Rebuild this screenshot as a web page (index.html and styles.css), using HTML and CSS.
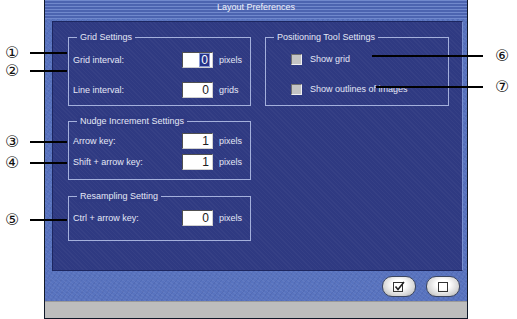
FILE: index.html
```html
<!DOCTYPE html>
<html lang="en">
<head>
    <meta charset="UTF-8">
    <title>Layout Preferences</title>
    <link rel="stylesheet" href="styles.css">
</head>
<body>
    <div class="screen">
        <div class="window">
            <div class="titlebar">Layout Preferences</div>
            <div class="window-body">
                <div class="panel">
                    <div class="col">
                        <div class="group grid-group">
                            <div class="legend">Grid Settings</div>
                            <div class="rows">
                                <div class="row"><span class="label">Grid interval:</span><span class="field"><span class="sel">0</span></span><span class="unit">pixels</span></div>
                                <div class="row"><span class="label">Line interval:</span><span class="field">0</span><span class="unit">grids</span></div>
                            </div>
                        </div>
                        <div class="group nudge-group">
                            <div class="legend">Nudge Increment Settings</div>
                            <div class="rows">
                                <div class="row"><span class="label">Arrow key:</span><span class="field">1</span><span class="unit">pixels</span></div>
                                <div class="row"><span class="label">Shift + arrow key:</span><span class="field">1</span><span class="unit">pixels</span></div>
                            </div>
                        </div>
                        <div class="group resample-group">
                            <div class="legend">Resampling Setting</div>
                            <div class="rows">
                                <div class="row"><span class="label">Ctrl + arrow key:</span><span class="field">0</span><span class="unit">pixels</span></div>
                            </div>
                        </div>
                    </div>
                    <div class="col">
                        <div class="group pos-group">
                            <div class="legend">Positioning Tool Settings</div>
                            <div class="rows">
                                <div class="row"><span class="check"></span><span>Show grid</span></div>
                                <div class="row"><span class="check"></span><span>Show outlines of images</span></div>
                            </div>
                        </div>
                    </div>
                </div>
                <div class="buttons">
                    <button class="pill">
                        <svg width="12" height="11" viewBox="0 0 12 11">
                            <rect x="0.5" y="1.5" width="9" height="9" fill="none" stroke="#333" stroke-width="1"/>
                            <path d="M2.5 5.5 L5 8.5 L11 1" fill="none" stroke="#222" stroke-width="1.6"/>
                        </svg>
                    </button>
                    <button class="pill">
                        <svg width="12" height="11" viewBox="0 0 12 11">
                            <rect x="1.5" y="1.5" width="9" height="9" fill="none" stroke="#333" stroke-width="1"/>
                        </svg>
                    </button>
                </div>
            </div>
            <div class="statusbar"></div>
        </div>

        <!-- callout markers -->
        <div class="callout left c1"><span class="num">①</span><span class="line"></span></div>
        <div class="callout left c2"><span class="num">②</span><span class="line"></span></div>
        <div class="callout left c3"><span class="num">③</span><span class="line"></span></div>
        <div class="callout left c4"><span class="num">④</span><span class="line"></span></div>
        <div class="callout left c5"><span class="num">⑤</span><span class="line"></span></div>
        <div class="callout right c6"><span class="line"></span><span class="num">⑥</span></div>
        <div class="callout right c7"><span class="line"></span><span class="num">⑦</span></div>
    </div>
</body>
</html>
```

FILE: styles.css
```css
body {
    margin: 0;
    background: #fff;
    font-family: "Liberation Sans", Arial, sans-serif;
}

.screen {
    position: relative;
    width: 517px;
    height: 319px;
    overflow: hidden;
}

.window {
    margin-left: 44px;
    width: 422px;
    height: 318px;
    border: 1px solid #101828;
    border-top: none;
    background: #5a76c0;
    display: flex;
    flex-direction: column;
}

.titlebar {
    height: 20px;
    box-sizing: border-box;
    padding-top: 2px;
    text-align: center;
    font-size: 9px;
    line-height: 11px;
    color: #f0f2fa;
    background: repeating-linear-gradient(to bottom, #7088cc 0 1px, #4c64b0 1px 3px);
}

.window-body {
    padding: 2px 4px 0 7px;
    background-color: #5873bf;
    background-image:
        repeating-linear-gradient(37deg, rgba(255,255,255,0.05) 0 1px, transparent 1px 3px),
        repeating-linear-gradient(-53deg, rgba(0,0,40,0.06) 0 1px, transparent 1px 4px);
}

.panel {
    height: 250px;
    box-sizing: border-box;
    border: 1px solid #1c2660;
    border-right-color: #7a90d0;
    background-color: #2f3a82;
    background-image: repeating-linear-gradient(45deg, rgba(255,255,255,0.03) 0 1px, transparent 1px 3px);
    padding: 15px 0 0 15px;
    display: flex;
    gap: 14px;
}

.col {
    display: flex;
    flex-direction: column;
    gap: 15px;
}

.col:first-child {
    width: 183px;
}

.col:last-child {
    width: 184px;
}

.group {
    border: 1px solid #a4b0dc;
    color: #e4e8f6;
    font-size: 9px;
}

.legend {
    width: fit-content;
    margin: -6px 0 0 8px;
    padding: 0 3px;
    line-height: 11px;
    background: #2f3a82;
}

.rows {
    display: flex;
    flex-direction: column;
    padding-left: 4px;
}

.row {
    height: 16px;
    display: flex;
    align-items: center;
}

.label {
    width: 109px;
}

.field {
    width: 31px;
    height: 16px;
    box-sizing: border-box;
    background: #fff;
    border-top: 1px solid #505050;
    border-left: 1px solid #505050;
    border-right: 1px solid #d0d0d0;
    border-bottom: 1px solid #d0d0d0;
    color: #202020;
    font-size: 12px;
    line-height: 14px;
    text-align: right;
    padding-right: 3px;
    margin-right: 6px;
}

.sel {
    display: inline-block;
    background: #26338a;
    color: #fff;
    line-height: 12px;
    padding: 0 1px;
    outline: 1px solid #8c9ad4;
}

.grid-group .rows {
    padding-top: 9px;
    padding-bottom: 7px;
    gap: 14px;
}

.nudge-group .rows {
    padding-top: 6px;
    padding-bottom: 9px;
    gap: 5px;
}

.resample-group {
    margin-top: 1px;
}

.resample-group .rows {
    padding-top: 8px;
    padding-bottom: 14px;
}

.pos-group .rows {
    padding: 8px 0 8px 25px;
    gap: 14px;
}

.check {
    width: 9px;
    height: 9px;
    margin-right: 8px;
    background: #c4c4c4;
    border: 1px solid #707070;
    border-right-color: #f0f0f0;
    border-bottom-color: #f0f0f0;
}

.buttons {
    height: 30px;
    display: flex;
    justify-content: flex-end;
    align-items: flex-start;
    gap: 10px;
    padding: 5px 3px 0 0;
    box-sizing: border-box;
}

.pill {
    width: 34px;
    height: 21px;
    padding: 0;
    border: 1px solid #3c4660;
    border-radius: 10px;
    background: radial-gradient(ellipse at 50% 40%, #ffffff 30%, #d4d4d4 70%, #9a9a9a 100%);
    display: flex;
    align-items: center;
    justify-content: center;
}

.statusbar {
    height: 16px;
    background: #bdbdbd;
    border-top: 1px solid #9a9a9a;
}

/* callouts */
.callout {
    position: absolute;
    display: flex;
    align-items: center;
    height: 16px;
}

.num {
    font-family: "DejaVu Sans", sans-serif;
    font-size: 16px;
    line-height: 16px;
    color: #111;
}

.line {
    height: 2px;
    background: #000;
}

.callout.left {
    left: 5px;
}

.callout.left .num {
    width: 25px;
}

.callout.left .line {
    width: 37px;
}

.c1 { top: 45px; }
.c2 { top: 63px; }
.c3 { top: 134px; }
.c4 { top: 155px; }
.c5 { top: 212px; }

.callout.right .num {
    margin-left: 12px;
}

.c6 { top: 48px; left: 372px; }
.c6 .line { width: 111px; }
.c7 { top: 79px; left: 376px; }
.c7 .line { width: 107px; }
```
